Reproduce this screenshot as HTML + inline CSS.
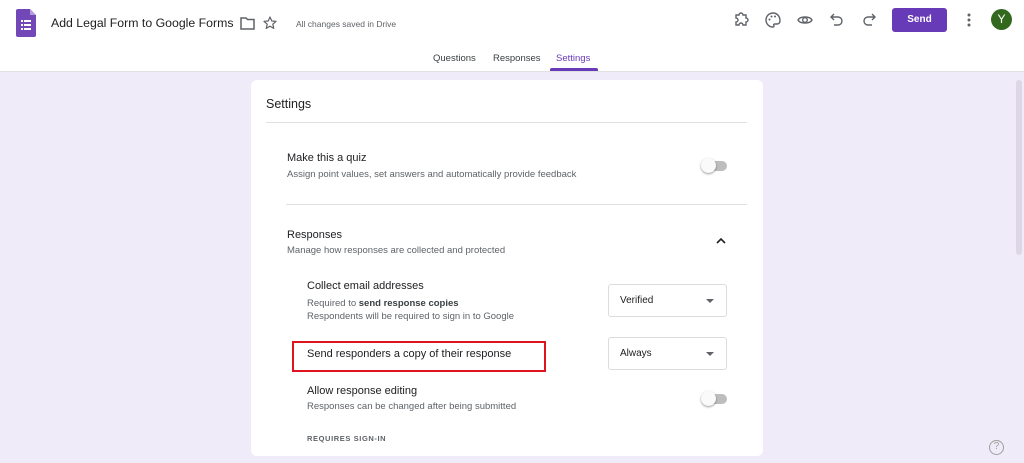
<!DOCTYPE html>
<html><head><meta charset="utf-8"><style>
*{margin:0;padding:0;box-sizing:border-box}
body{width:1024px;height:463px;overflow:hidden;background:#f0ebf8;font-family:"Liberation Sans",Arial,sans-serif;position:relative;color:#202124}
.a{position:absolute;white-space:nowrap}
#hdr{position:absolute;left:0;top:0;width:1024px;height:72px;background:#fff;border-bottom:1px solid #e0e0e0}
.card{position:absolute;left:251px;top:80px;width:512px;height:376px;background:#fff;border-radius:6px}
.t{font-size:11px;color:#202124}
.s{font-size:9.5px;color:#5f6368}
.tog{position:absolute;width:24px;height:10px;border-radius:5px;background:#bdbdbd}
.tog:before{content:"";position:absolute;left:-2px;top:-3px;width:15px;height:15px;border-radius:50%;background:#fafafa;box-shadow:0 1px 2px rgba(0,0,0,.4)}
.sel{position:absolute;width:119px;height:33px;border:1px solid #dadce0;border-radius:3px;font-size:10px;padding-left:11px;line-height:31px}
.sel:after{content:"";position:absolute;right:12px;top:14px;border:4px solid transparent;border-top-color:#5f6368;border-bottom:0}
</style></head><body>
<div id="hdr">
<svg class="a" style="left:16px;top:9px" width="20" height="28" viewBox="0 0 20 28"><path d="M2 0h12l6 6v20a2 2 0 0 1-2 2H2a2 2 0 0 1-2-2V2a2 2 0 0 1 2-2z" fill="#7248b9"/><path d="M14 0l6 6h-6z" fill="#b39ddb"/><g fill="#fff"><rect x="5" y="11" width="2" height="2"/><rect x="8" y="11" width="7" height="2"/><rect x="5" y="15" width="2" height="2"/><rect x="8" y="15" width="7" height="2"/><rect x="5" y="19" width="2" height="2"/><rect x="8" y="19" width="7" height="2"/></g></svg>
<div class="a" style="left:51px;top:16px;font-size:12.3px;color:#202124">Add Legal Form to Google Forms</div>
<svg class="a" style="left:240px;top:17px" width="15" height="13" viewBox="0 0 15 13"><path d="M1 1h5l1.5 1.5H14v9.5H1z" fill="none" stroke="#5f6368" stroke-width="1.5"/></svg>
<svg class="a" style="left:263px;top:16px" width="14" height="14" viewBox="0 0 14 14"><path d="M7 1l1.8 4 4.2.4-3.2 2.8 1 4.2L7 10.2 3.2 12.4l1-4.2L1 5.4l4.2-.4z" fill="none" stroke="#5f6368" stroke-width="1.2" stroke-linejoin="round"/></svg>
<div class="a" style="left:296px;top:19px;font-size:8.5px;color:#5f6368">All changes saved in Drive</div>
<svg class="a" style="left:733px;top:12px" width="16" height="16" viewBox="0 0 16 16"><path d="M3 3h3a2 2 0 0 1 4 0h3v3a2 2 0 0 1 0 4v3h-3a2 2 0 0 0-4 0H3v-3a2 2 0 0 0 0-4z" fill="none" stroke="#5f6368" stroke-width="1.4"/></svg>
<svg class="a" style="left:765px;top:12px" width="16" height="16" viewBox="0 0 16 16"><path d="M8 1a7 7 0 0 0 0 14c1 0 1.3-.8.8-1.5-.5-.8 0-1.5 1-1.5H12a3 3 0 0 0 3-3C15 4 12 1 8 1z" fill="none" stroke="#5f6368" stroke-width="1.4"/><circle cx="4.5" cy="7.5" r="1" fill="#5f6368"/><circle cx="6.5" cy="4.5" r="1" fill="#5f6368"/><circle cx="10" cy="4.5" r="1" fill="#5f6368"/></svg>
<svg class="a" style="left:797px;top:13px" width="16" height="14" viewBox="0 0 16 14"><path d="M1 7c2-4 12-4 14 0-2 4-12 4-14 0z" fill="none" stroke="#5f6368" stroke-width="1.4"/><circle cx="8" cy="7" r="2.3" fill="none" stroke="#5f6368" stroke-width="1.4"/></svg>
<svg class="a" style="left:830px;top:12px" width="14" height="16" viewBox="0 0 14 16"><path d="M4 2L1 5l3 3M1 5h7a4 4 0 0 1 0 8H4" fill="none" stroke="#5f6368" stroke-width="1.4"/></svg>
<svg class="a" style="left:862px;top:12px" width="14" height="16" viewBox="0 0 14 16"><path d="M10 2l3 3-3 3M13 5H6a4 4 0 0 0 0 8h4" fill="none" stroke="#5f6368" stroke-width="1.4"/></svg>
<div class="a" style="left:892px;top:8px;width:55px;height:24px;background:#673ab7;border-radius:3px;color:#fff;font-size:10px;font-weight:bold;text-align:center;line-height:24px">Send</div>
<svg class="a" style="left:966px;top:12px" width="6" height="16" viewBox="0 0 6 16"><circle cx="3" cy="3" r="1.5" fill="#5f6368"/><circle cx="3" cy="8" r="1.5" fill="#5f6368"/><circle cx="3" cy="13" r="1.5" fill="#5f6368"/></svg>
<div class="a" style="left:991px;top:9px;width:21px;height:21px;border-radius:50%;background:#33691e;color:#fff;font-size:12px;text-align:center;line-height:21px">Y</div>
<div class="a" style="left:433px;top:53px;font-size:9.5px;color:#3c4043">Questions</div>
<div class="a" style="left:493px;top:53px;font-size:9.5px;color:#3c4043">Responses</div>
<div class="a" style="left:556px;top:53px;font-size:9.5px;color:#673ab7">Settings</div>
<div class="a" style="left:550px;top:68px;width:48px;height:3px;background:#673ab7;border-radius:2px 2px 0 0"></div>
</div>
<div class="card"></div>
<div class="a" style="left:266px;top:97px;font-size:12.5px">Settings</div>
<div class="a" style="left:266px;top:122px;width:481px;height:1px;background:#e0e0e0"></div>
<div class="a t" style="left:287px;top:152px">Make this a quiz</div>
<div class="a s" style="left:287px;top:169px">Assign point values, set answers and automatically provide feedback</div>
<div class="tog" style="left:703px;top:161px"></div>
<div class="a" style="left:286px;top:204px;width:461px;height:1px;background:#e0e0e0"></div>
<div class="a t" style="left:287px;top:229px">Responses</div>
<div class="a s" style="left:287px;top:245px">Manage how responses are collected and protected</div>
<svg class="a" style="left:716px;top:237px" width="10" height="7" viewBox="0 0 10 7"><path d="M1 6l4-4 4 4" fill="none" stroke="#202124" stroke-width="1.6"/></svg>
<div class="a t" style="left:307px;top:280px">Collect email addresses</div>
<div class="a s" style="left:307px;top:298px">Required to <b style="color:#3c4043">send response copies</b></div>
<div class="a s" style="left:307px;top:311px">Respondents will be required to sign in to Google</div>
<div class="sel" style="left:608px;top:284px">Verified</div>
<div class="a" style="left:292px;top:341px;width:254px;height:31px;border:2px solid #e0141e"></div>
<div class="a t" style="left:307px;top:348px">Send responders a copy of their response</div>
<div class="sel" style="left:608px;top:337px">Always</div>
<div class="a t" style="left:307px;top:385px">Allow response editing</div>
<div class="a s" style="left:307px;top:401px">Responses can be changed after being submitted</div>
<div class="tog" style="left:703px;top:394px"></div>
<div class="a" style="left:307px;top:434px;font-size:7.5px;color:#5f6368;font-weight:bold;letter-spacing:.6px">REQUIRES SIGN-IN</div>
<div class="a" style="left:1016px;top:80px;width:6px;height:175px;background:#dcd6e6;border-radius:3px"></div>
<div class="a" style="left:989px;top:440px;width:15px;height:15px;border:1.5px solid #9e9e9e;border-radius:50%;font-size:10px;color:#9e9e9e;text-align:center;line-height:12px">?</div>
</body></html>
